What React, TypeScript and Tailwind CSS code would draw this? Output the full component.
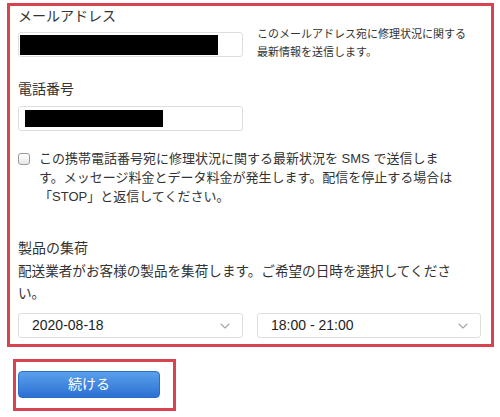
import React from "react";

const font = "font-['Liberation_Sans','Noto_Sans_CJK_JP',sans-serif]";

function Chevron() {
  return (
    <svg width="10" height="6" viewBox="0 0 10 6" fill="none">
      <path d="M1 1l4 4 4-4" stroke="#a8a8a8" strokeWidth="1.1" strokeLinecap="round" strokeLinejoin="round" />
    </svg>
  );
}

function Select({ value, width }: { value: string; width: string }) {
  return (
    <div className={`flex h-[25px] ${width} items-center justify-between rounded-[3px] border border-[#dedede] bg-white pl-[13px] pr-[12px] text-[14px] text-[#222]`}>
      <span>{value}</span>
      <Chevron />
    </div>
  );
}

export default function App() {
  return (
    <div className={`${font} h-[417px] w-[500px] bg-white text-[#333] pt-[3px]`}>
      <div className="ml-[7px] w-[487px] border-[3px] border-[#d9434f] pl-[8px] pr-[10px] pb-[6px]">
        <div className="text-[14px] leading-[20px]">メールアドレス</div>
        <div className="mt-[6px] flex items-start gap-[14px]">
          <div className="flex h-[25px] w-[225px] items-center rounded-[3px] border border-[#dedede] bg-white pl-[1px]">
            <div className="h-[20px] w-[198px] bg-black" />
          </div>
          <div className="-mt-[7px] text-[11px] leading-[18px] text-[#333]">
            このメールアドレス宛に修理状況に関する
            <br />
            最新情報を送信します。
          </div>
        </div>
        <div className="mt-[18px] text-[14px] leading-[20px]">電話番号</div>
        <div className="mt-[7px] flex h-[25px] w-[225px] items-center rounded-[3px] border border-[#dedede] bg-white pl-[6px]">
          <div className="h-[17px] w-[138px] bg-black" />
        </div>
        <div className="mt-[18px] flex items-start gap-[9px]">
          <div className="mt-[4px] h-[12px] w-[12px] shrink-0 rounded-[3px] border border-[#9a9a9a] bg-gradient-to-b from-white to-[#e8e8e8]" />
          <div className="text-[13px] leading-[19px] w-[425px]">
            この携帯電話番号宛に修理状況に関する最新状況を SMS で送信しま
            <br />
            す。メッセージ料金とデータ料金が発生します。配信を停止する場合は
            <br />
            「STOP」と返信してください。
          </div>
        </div>
        <div className="mt-[32px] text-[14px] leading-[20px]">製品の集荷</div>
        <div className="mt-[3px] text-[13.6px] leading-[22px]">
          配送業者がお客様の製品を集荷します。ご希望の日時を選択してくださ
          <br />
          い。
        </div>
        <div className="mt-[8px] flex gap-[14px]">
          <Select value="2020-08-18" width="w-[225px]" />
          <Select value="18:00 - 21:00" width="w-[224px]" />
        </div>
      </div>
      <div className="ml-[13px] mt-[12px] w-[163px] border-[3px] border-[#d9434f] pl-[2px] pt-[9px] pb-[10px]">
        <button className="flex h-[27px] w-[142px] items-center justify-center rounded-[4px] border border-[#2b6cc4] bg-gradient-to-b from-[#5aa0ec] to-[#2c70d2] text-[14px] text-white">
          続ける
        </button>
      </div>
    </div>
  );
}
